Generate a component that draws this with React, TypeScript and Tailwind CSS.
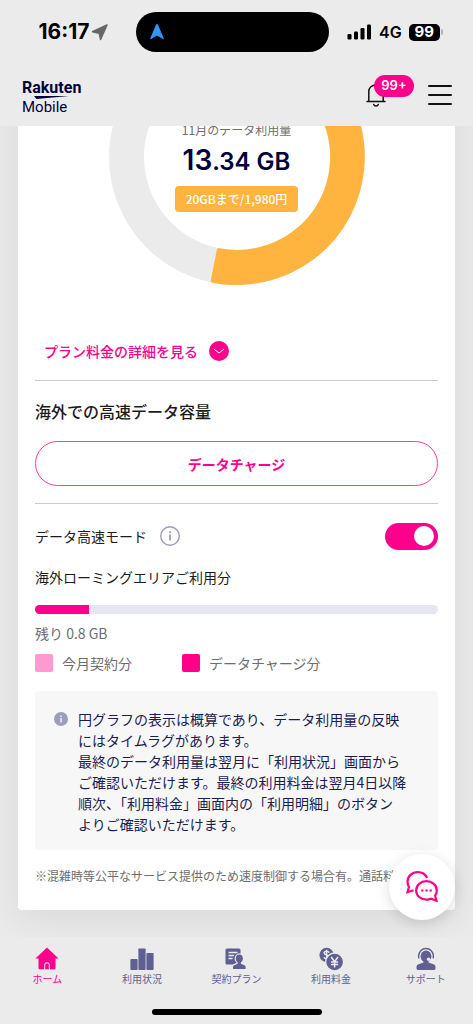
import React, { useState } from "react";

type NavItem = {
  label: string;
  icon: React.ReactNode;
  active?: boolean;
};

const noteLines = [
  "円グラフの表示は概算であり、データ利用量の反映",
  "にはタイムラグがあります。",
  "最終のデータ利用量は翌月に「利用状況」画面から",
  "ご確認いただけます。最終の利用料金は翌月4日以降",
  "順次、「利用料金」画面内の「利用明細」のボタン",
  "よりご確認いただけます。"
];

function HomeIcon() {
  return (
    <svg viewBox="0 0 24 24" className="h-6 w-6" fill="currentColor" aria-hidden="true">
      <path d="M12 .6.4 11.6h3.1V21c0 .8.5 1.300 1.300 1.300h4.400v-4.200c0-1.700 1.100-2.800 2.800-2.800s2.800 1.100 2.800 2.800v4.200h4.400c.8 0 1.300-.5 1.300-1.300v-9.400h3.100z" />
      <path d="M10.200 22.300v-4.200c0-1 .8-1.800 1.800-1.800s1.800.8 1.800 1.800v4.200z" />
    </svg>
  );
}

function UsageIcon() {
  return (
    <svg viewBox="0 0 24 24" className="h-6 w-6" fill="currentColor" aria-hidden="true">
      <rect x="0.400" y="12" width="7.200" height="11" rx="0.800" />
      <rect x="8.400" y="1.400" width="7.200" height="21.600" rx="0.800" />
      <rect x="16.400" y="6" width="7.200" height="17" rx="0.800" />
    </svg>
  );
}

function PlanIcon() {
  return (
    <svg viewBox="0 0 24 24" className="h-6 w-6" aria-hidden="true">
      <rect x="1.500" y="1.500" width="15" height="16" rx="1.500" fill="currentColor" />
      <path d="M4.500 5.500h9M4.500 8.500h5.500M4.500 11.500h4" stroke="#ebebeb" strokeWidth="1.300" fill="none" />
      <g fill="#ebebeb" stroke="#ebebeb" strokeWidth="2.400">
        <ellipse cx="15.300" cy="11.500" rx="3.500" ry="4" />
        <path d="M13.700 14v2.800l-3.400 1.400c-.9.4-1.300 1-1.300 1.900V22h12.600v-1.900c0-.9-.4-1.500-1.300-1.900l-3.400-1.400V14z" />
      </g>
      <g fill="currentColor">
        <ellipse cx="15.300" cy="11.500" rx="3.500" ry="4" />
        <path d="M13.700 14v2.800l-3.400 1.400c-.9.4-1.300 1-1.300 1.900V22h12.600v-1.900c0-.9-.4-1.500-1.300-1.900l-3.400-1.400V14z" />
      </g>
    </svg>
  );
}

function FeeIcon() {
  return (
    <svg viewBox="0 0 24 24" className="h-6 w-6" fill="currentColor" aria-hidden="true">
      <circle cx="7.600" cy="8" r="7.200" />
      <path
        d="M10.200 5.600C9.700 4.700 8.800 4.300 7.600 4.300c-1.600 0-2.500.7-2.500 1.800 0 2.400 5.100 1.300 5.100 3.800 0 1.100-1 1.800-2.600 1.800-1.400 0-2.300-.5-2.800-1.400M7.600 2.800v10.400"
        stroke="#ebebeb"
        strokeWidth="1.400"
        fill="none"
      />
      <circle cx="15.600" cy="15" r="9" stroke="#ebebeb" strokeWidth="1.400" />
      <path
        d="m12.200 10 3.400 4.800L19 10M15.600 14.800v5.700M12 15h7.200M12 17.600h7.200"
        stroke="#ebebeb"
        strokeWidth="1.500"
        fill="none"
      />
    </svg>
  );
}

function SupportIcon() {
  return (
    <svg viewBox="0 0 24 24" className="h-6 w-6" fill="currentColor" aria-hidden="true">
      <path
        d="M5 11.500c-.3-.8-.4-1.600-.4-2.500C4.600 4.700 7.800 1.500 12 1.500S19.400 4.700 19.400 9c0 .9-.1 1.700-.4 2.500"
        fill="none"
        stroke="currentColor"
        strokeWidth="1.400"
      />
      <ellipse cx="12" cy="9.300" rx="5.400" ry="5.900" />
      <path d="M9.500 12.500v3l-5 1.800c-1.300.5-2 1.400-2 2.700v1.600c0 .8.500 1.300 1.300 1.300h16.400c.8 0 1.300-.5 1.300-1.300V20c0-1.300-.7-2.200-2-2.700l-5-1.800v-3z" />
      <circle cx="14.600" cy="12.300" r="1.700" fill="#ebebeb" />
      <path d="M18.600 11c-.3 1-1.500 1.600-3 1.600" fill="none" stroke="#ebebeb" strokeWidth="1" />
    </svg>
  );
}

const navItems: NavItem[] = [
  { label: "ホーム", icon: <HomeIcon />, active: true },
  { label: "利用状況", icon: <UsageIcon /> },
  { label: "契約プラン", icon: <PlanIcon /> },
  { label: "利用料金", icon: <FeeIcon /> },
  { label: "サポート", icon: <SupportIcon /> }
];

function StatusBar() {
  return (
    <div className="grid grid-cols-[136fr_193px_144fr] items-center pt-3 font-['Inter','Liberation_Sans',sans-serif] text-black">
      <div className="flex items-center justify-center gap-0.5 pl-3">
        <span className="text-[21px] leading-6 font-bold">16:17</span>
        <svg
          viewBox="0 0 18 18"
          className="h-[18px] w-[18px]"
          fill="#666"
          stroke="#666"
          strokeWidth="1.500"
          strokeLinejoin="round"
          aria-hidden="true"
        >
          <path d="M16 2 1.500 8.800 8.200 10.200 9.600 16.500z" />
        </svg>
      </div>
      <div className="flex h-10 items-center rounded-full bg-black pl-[13px]">
        <svg viewBox="0 0 16 18" className="h-[18px] w-4" fill="#2f96ff" aria-hidden="true">
          <path d="M8 1c.5 0 .8.300 1 .8l5.700 13.500c.2.700-.4 1.100-.9.700L8 12.400 2.200 16c-.5.400-1.100 0-.9-.7L7 1.800c.2-.5.500-.8 1-.8z" />
        </svg>
      </div>
      <div className="flex items-center gap-[7px] pl-[18px]">
        <svg viewBox="0 0 25 16" className="h-4 w-[25px]" aria-hidden="true">
          <rect x="0.500" y="10" width="4" height="5.500" rx="1.200" />
          <rect x="7" y="7.500" width="4" height="8" rx="1.200" />
          <rect x="13.500" y="4" width="4" height="11.500" rx="1.200" />
          <rect x="20" y="0.500" width="4" height="15" rx="1.200" />
        </svg>
        <span className="text-base leading-6 font-semibold">4G</span>
        <div className="flex items-center gap-px">
          <span className="flex h-[17px] w-[31px] items-center justify-center rounded-[5px] bg-black text-[15px] font-bold text-white">
            99
          </span>
          <span className="h-1.5 w-0.5 rounded-r-full bg-[#b5b5b5]" />
        </div>
      </div>
    </div>
  );
}

function Header() {
  return (
    <header className="flex h-[62px] items-center justify-between pr-[21px] pl-[22px] text-[#00003c]">
      <a href="#" aria-label="Rakuten Mobile" className="pt-1 font-['Roboto','Liberation_Sans',sans-serif]">
        <span className="block text-base leading-4 font-bold">Rakuten</span>
        <svg viewBox="0 0 60 3" className="h-[3px] w-[60px]" aria-hidden="true">
          <path d="M12 0h35L14.500 3z" fill="currentColor" />
        </svg>
        <span className="block text-[15px] leading-4">Mobile</span>
      </a>
      <div className="flex items-center gap-[14px]">
        <button type="button" aria-label="お知らせ" className="relative flex h-8 w-12 items-center">
          <svg
            viewBox="0 0 20 24"
            className="h-6 w-5"
            fill="none"
            stroke="#111"
            strokeWidth="1.500"
            strokeLinecap="round"
            aria-hidden="true"
          >
            <path d="M1 18.500h18M2.800 18.500V8.500C2.800 4.500 6 2 10 2s7.200 2.500 7.200 6.500v10M7.700 21.500c.5 1.200 1.200 1.500 2.300 1.500s1.800-.3 2.300-1.500" />
          </svg>
          <span className="absolute -top-1 left-2 flex h-[22px] w-10 items-center justify-center rounded-full bg-[#ff008c] font-['Inter',sans-serif] text-[13px] font-semibold text-white">
            99+
          </span>
        </button>
        <button type="button" aria-label="メニュー">
          <svg viewBox="0 0 24 22" className="h-[22px] w-6" stroke="#111" strokeWidth="2" strokeLinecap="round" aria-hidden="true">
            <path d="M1 2h22M1 11h22M1 20h22" />
          </svg>
        </button>
      </div>
    </header>
  );
}

function UsageDonut() {
  return (
    <div className="-mt-[97px] grid justify-items-center">
      <svg viewBox="0 0 256 256" className="col-start-1 row-start-1 h-64 w-64" aria-hidden="true">
        <circle cx="128" cy="128" r="110.500" fill="none" stroke="#ebebeb" strokeWidth="35" />
        <path
          d="M128 2a126 126 0 1 1-24.200 249.700L109.800 221.200A95 95 0 1 0 128 33z"
          fill="#ffb43f"
          stroke="#ffb43f"
          strokeWidth="4"
          strokeLinejoin="round"
        />
      </svg>
      <div className="col-start-1 row-start-1 flex flex-col items-center pt-[91px]">
        <p className="text-xs leading-5 text-[#6e6e6e]">11月のデータ利用量</p>
        <p className="mt-0.5 font-['Inter',sans-serif] text-2xl leading-9 font-semibold text-[#00003c]">
          <span className="text-[28px]">13</span>.34 GB
        </p>
        <p className="mt-1.5 rounded bg-[#ffb43f] px-[11px] text-xs leading-[26px] font-medium text-white">
          20GBまで/1,980円
        </p>
      </div>
    </div>
  );
}

export default function App() {
  const [highSpeed, setHighSpeed] = useState(true);

  return (
    <div className="flex min-h-screen flex-col bg-[#ebebeb] font-['Noto_Sans_CJK_JP',sans-serif] text-[#1c1c1c]">
      <StatusBar />
      <div className="h-3" />
      <Header />

      <main className="relative flex-1 overflow-hidden px-[18px] pb-[26px]">
        <div className="rounded-b bg-white px-[17px] pb-6 shadow-[0_8px_40px_4px_rgba(0,20,10,0.07)]">
          <UsageDonut />

          <button type="button" className="mt-[54px] ml-[9px] flex items-center gap-[11px] text-[#ff008c]">
            <span className="text-sm leading-6 font-medium">プラン料金の詳細を見る</span>
            <svg viewBox="0 0 20 20" className="h-5 w-5" fill="none" aria-hidden="true">
              <circle cx="10" cy="10" r="10" fill="#ff008c" />
              <path d="m5.500 8.500 4.500 3.500 4.500-3.500" stroke="#fff" strokeLinecap="round" />
            </svg>
          </button>

          <section className="mt-[17px] border-t border-[#c9c9da] pt-[18px]">
            <h2 className="text-base leading-6 font-medium">海外での高速データ容量</h2>
            <button
              type="button"
              className="mt-[18px] h-[45px] w-full rounded-full border border-[#ff3ba6] text-sm font-bold text-[#ff008c]"
            >
              データチャージ
            </button>
          </section>

          <section className="mt-[17px] border-t border-[#c9c9da] pt-[18px]">
            <div className="flex items-center justify-between">
              <div className="flex items-center gap-[13px]">
                <label htmlFor="high-speed" className="text-sm leading-7">
                  データ高速モード
                </label>
                <button type="button" aria-label="データ高速モードについて">
                  <svg viewBox="0 0 20 20" className="h-5 w-5" fill="none" stroke="#9c9cbc" aria-hidden="true">
                    <circle cx="10" cy="10" r="9.300" strokeWidth="1.400" />
                    <path d="M10 8.500v6M10 5.300v1.800" strokeWidth="1.800" />
                  </svg>
                </button>
              </div>
              <label className="flex h-[27px] w-[53px] cursor-pointer items-center rounded-full bg-gray-300 px-1 has-checked:justify-end has-checked:bg-[#ff008c]">
                <input
                  id="high-speed"
                  type="checkbox"
                  role="switch"
                  aria-label="データ高速モード"
                  className="sr-only"
                  checked={highSpeed}
                  onChange={(event) => setHighSpeed(event.target.checked)}
                />
                <span className="h-5 w-5 rounded-full bg-white" />
              </label>
            </div>

            <h3 className="mt-[15px] text-sm leading-6">海外ローミングエリアご利用分</h3>
            <div className="mt-4 h-[9px] overflow-hidden rounded-full bg-[#e6e6f0]">
              <div className="h-full w-2/15 bg-[#ff008c]" />
            </div>
            <p className="mt-[7px] text-sm leading-6 text-[#6e6e6e]">残り 0.8 GB</p>
            <ul className="mt-1.5 flex gap-[50px] text-sm leading-6 text-[#6e6e6e]">
              <li className="flex items-center gap-[9px]">
                <span className="h-[18px] w-[18px] rounded-xs bg-[#ff99d1]" />
                今月契約分
              </li>
              <li className="flex items-center gap-[9px]">
                <span className="h-[18px] w-[18px] rounded-xs bg-[#ff008c]" />
                データチャージ分
              </li>
            </ul>
          </section>

          <div className="mt-4 flex gap-2.5 rounded bg-[#f7f7f7] pt-[18px] pb-[15px] pl-[19px]">
            <svg viewBox="0 0 14 14" className="mt-[3px] h-3.5 w-3.5 shrink-0" aria-hidden="true">
              <circle cx="7" cy="7" r="7" fill="#9c9cbc" />
              <path d="M7 6v4.500M7 3.500V5" stroke="#f7f7f7" strokeWidth="1.400" />
            </svg>
            <p className="text-sm leading-[21px] whitespace-nowrap text-[#1c1c50]">
              {noteLines.map((line) => (
                <span key={line} className="block">
                  {line}
                </span>
              ))}
            </p>
          </div>

          <p className="mt-4 overflow-hidden text-xs leading-5 whitespace-nowrap text-[#6e6e6e]">
            ※混雑時等公平なサービス提供のため速度制御する場合有。通話料等別
          </p>
        </div>

        <button
          type="button"
          aria-label="チャット"
          className="absolute right-[18px] bottom-[17px] flex h-[66px] w-[66px] items-center justify-center rounded-full bg-white text-[#ff008c] shadow-[0_3px_14px_rgba(0,0,0,0.14)]"
        >
          <svg
            viewBox="0 0 34 34"
            className="h-[34px] w-[34px]"
            fill="none"
            stroke="currentColor"
            strokeWidth="2.200"
            aria-hidden="true"
          >
            <path d="M22 8C20.500 4.500 17 2.200 12.800 2.200 7 2.200 2.500 6.200 2.500 11.700c0 2 .6 3.700 1.500 5.200L2.500 22.200l6-1.900" />
            <path d="M21.500 11.200c5.700 0 10.300 4 10.300 9.200 0 2-.7 3.800-1.700 5.300l1.400 5-5.500-1.900c-1.300.6-2.900.9-4.500.9-5.800 0-10.300-4-10.300-9.300s4.500-9.200 10.300-9.200z" />
            <path d="M16.200 20.500h2.200M20.400 20.500h2.200M24.600 20.500h2.200" />
          </svg>
        </button>
      </main>

      <nav className="flex flex-col items-center bg-[#ebebeb] pt-2.5 pb-[9px]">
        <ul className="grid w-full grid-cols-5">
          {navItems.map((item) => (
            <li key={item.label}>
              <a
                href="#"
                aria-current={item.active ? "page" : undefined}
                className={`flex flex-col items-center text-[10px] leading-[15px] ${item.active ? "text-[#ff008c]" : "text-[#5f5f91]"}`}
              >
                {item.icon}
                {item.label}
              </a>
            </li>
          ))}
        </ul>
        <div className="mt-[23px] h-1.5 w-[170px] rounded-full bg-black" />
      </nav>
    </div>
  );
}
